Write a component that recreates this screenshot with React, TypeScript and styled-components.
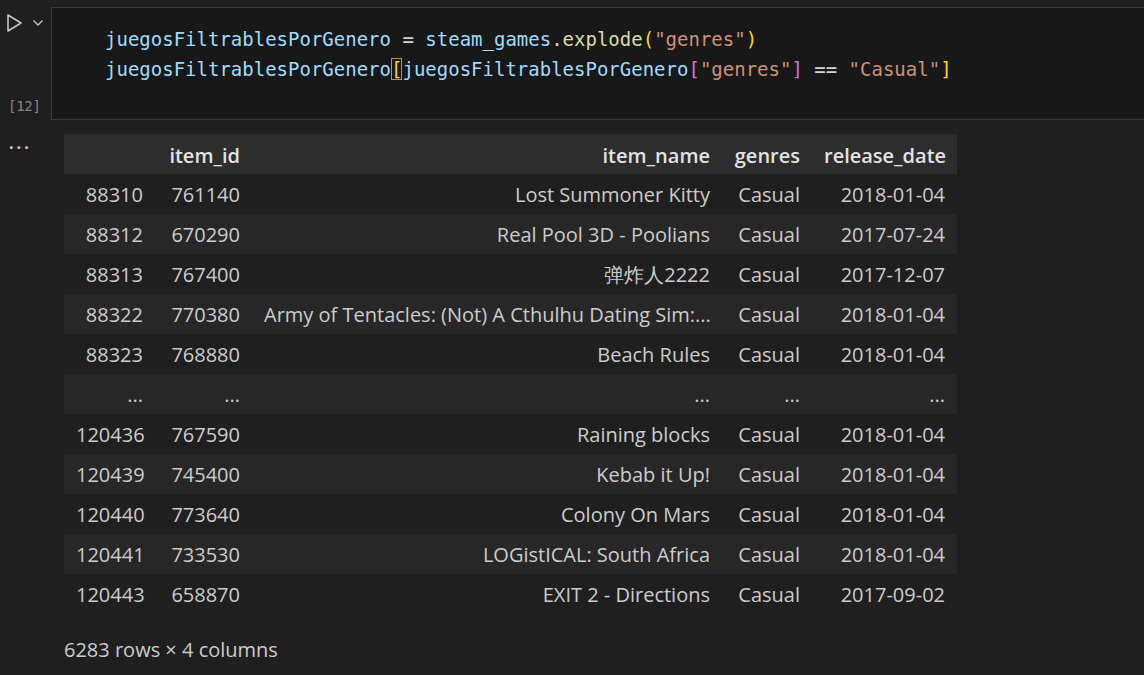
import React from 'react';
import styled, { createGlobalStyle } from 'styled-components';

const GlobalStyle = createGlobalStyle`
  html, body {
    margin: 0;
    padding: 0;
    background: #1f1f1f;
  }
  #root {
    min-height: 675px;
  }
`;

const Page = styled.div`
  width: 1144px;
  height: 675px;
  overflow: hidden;
  background: #1f1f1f;
  padding-top: 7px;
  box-sizing: border-box;
  font-family: "Open Sans", "Noto Sans", sans-serif;
`;

const CellRow = styled.div`
  display: grid;
  grid-template-columns: 51px 1fr;
`;

const Gutter = styled.div`
  display: flex;
  flex-direction: column;
  justify-content: space-between;
  padding: 6px 0 6px 6px;
`;

const RunButtons = styled.div`
  display: flex;
  align-items: center;
  gap: 8px;
`;

const ExecCount = styled.span`
  font-family: "DejaVu Sans Mono", monospace;
  font-size: 14px;
  color: #858585;
  padding-left: 2px;
  letter-spacing: -0.3px;
`;

const Editor = styled.div`
  height: 113px;
  box-sizing: border-box;
  background: #181818;
  border: 1px solid #3a3a3a;
  border-right: none;
  padding: 16px 0 0 53px;
  font-family: "DejaVu Sans Mono", "Liberation Mono", monospace;
  font-size: 19px;
`;

const CodeLine = styled.div`
  height: 30px;
  line-height: 30px;
  white-space: pre;
  color: #d4d4d4;
`;

const Tok = styled.span<{ $c: string; $box?: boolean }>`
  color: ${(p) => p.$c};
  ${(p) => (p.$box ? 'outline: 1px solid #b89a2a; outline-offset: -1px;' : '')}
`;

const OutputRow = styled.div`
  display: grid;
  grid-template-columns: 51px 1fr;
  margin-top: 14px;
`;

const Dots = styled.div`
  color: #cccccc;
  font-size: 16px;
  line-height: 16px;
  padding: 5px 0 0 9px;
  letter-spacing: 3px;
  font-weight: 700;
`;

const Output = styled.div`
  padding-left: 13px;
`;

const Table = styled.table`
  border-collapse: collapse;
  table-layout: fixed;
  width: 893px;
  font-size: 20px;
  color: #cccccc;
`;

const Th = styled.th`
  height: 38px;
  padding: 2px 12px 0;
  text-align: right;
  font-weight: 600;
  color: #e2e2e2;
  white-space: nowrap;
`;

const Tr = styled.tr<{ $head?: boolean }>`
  background: ${(p) => (p.$head ? '#2d2d2d' : 'transparent')};
  &:nth-child(even) {
    background: #272727;
  }
`;

const Td = styled.td`
  height: 39px;
  padding: 1px 12px 0;
  text-align: right;
  white-space: nowrap;
`;

const Footer = styled.div`
  margin-top: 22px;
  font-size: 20px;
  color: #cccccc;
`;

const rows: string[][] = [
  ['88310', '761140', 'Lost Summoner Kitty', 'Casual', '2018-01-04'],
  ['88312', '670290', 'Real Pool 3D - Poolians', 'Casual', '2017-07-24'],
  ['88313', '767400', '弹炸人2222', 'Casual', '2017-12-07'],
  ['88322', '770380', 'Army of Tentacles: (Not) A Cthulhu Dating Sim:...', 'Casual', '2018-01-04'],
  ['88323', '768880', 'Beach Rules', 'Casual', '2018-01-04'],
  ['...', '...', '...', '...', '...'],
  ['120436', '767590', 'Raining blocks', 'Casual', '2018-01-04'],
  ['120439', '745400', 'Kebab it Up!', 'Casual', '2018-01-04'],
  ['120440', '773640', 'Colony On Mars', 'Casual', '2018-01-04'],
  ['120441', '733530', 'LOGistICAL: South Africa', 'Casual', '2018-01-04'],
  ['120443', '658870', 'EXIT 2 - Directions', 'Casual', '2017-09-02'],
];

const VAR = '#9cdcfe';
const FN = '#dcdcaa';
const STR = '#ce9178';
const B1 = '#ffd700';
const B2 = '#da70d6';
const OP = '#d4d4d4';

export default function App() {
  return (
    <Page>
      <GlobalStyle />
      <CellRow>
        <Gutter>
          <RunButtons>
            <svg width="18" height="20" viewBox="0 0 18 20" fill="none">
              <path d="M2 2 L15 10 L2 18 Z" stroke="#c5c5c5" strokeWidth="1.6" strokeLinejoin="round" />
            </svg>
            <svg width="12" height="8" viewBox="0 0 12 8" fill="none">
              <path d="M1.5 1.5 L6 6 L10.5 1.5" stroke="#c5c5c5" strokeWidth="1.3" />
            </svg>
          </RunButtons>
          <ExecCount>[12]</ExecCount>
        </Gutter>
        <Editor>
          <CodeLine>
            <Tok $c={VAR}>juegosFiltrablesPorGenero</Tok>
            <Tok $c={OP}> = </Tok>
            <Tok $c={VAR}>steam_games</Tok>
            <Tok $c={OP}>.</Tok>
            <Tok $c={FN}>explode</Tok>
            <Tok $c={B1}>(</Tok>
            <Tok $c={STR}>"genres"</Tok>
            <Tok $c={B1}>)</Tok>
          </CodeLine>
          <CodeLine>
            <Tok $c={VAR}>juegosFiltrablesPorGenero</Tok>
            <Tok $c={B1} $box>[</Tok>
            <Tok $c={VAR}>juegosFiltrablesPorGenero</Tok>
            <Tok $c={B2}>[</Tok>
            <Tok $c={STR}>"genres"</Tok>
            <Tok $c={B2}>]</Tok>
            <Tok $c={OP}> == </Tok>
            <Tok $c={STR}>"Casual"</Tok>
            <Tok $c={B1}>]</Tok>
          </CodeLine>
        </Editor>
      </CellRow>
      <OutputRow>
        <Dots>···</Dots>
        <Output>
          <Table>
            <colgroup>
              <col style={{ width: 91 }} />
              <col style={{ width: 97 }} />
              <col style={{ width: 470 }} />
              <col style={{ width: 90 }} />
              <col style={{ width: 145 }} />
            </colgroup>
            <thead>
              <Tr $head>
                <Th />
                <Th>item_id</Th>
                <Th>item_name</Th>
                <Th>genres</Th>
                <Th>release_date</Th>
              </Tr>
            </thead>
            <tbody>
              {rows.map((r, i) => (
                <Tr key={i}>
                  {r.map((c, j) => (
                    <Td key={j}>{c}</Td>
                  ))}
                </Tr>
              ))}
            </tbody>
          </Table>
          <Footer>6283 rows × 4 columns</Footer>
        </Output>
      </OutputRow>
    </Page>
  );
}
